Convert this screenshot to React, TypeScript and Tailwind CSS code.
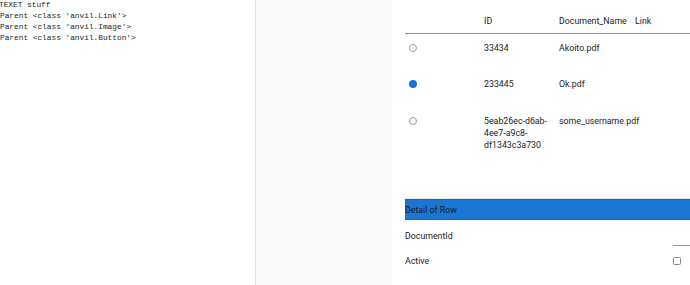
import React from "react";

type Row = { id: string; name: string; selected: boolean; h: string; pt: string };

const ROWS: Row[] = [
  { id: "33434", name: "Akoito.pdf", selected: false, h: "h-[36px]", pt: "pt-[8px]" },
  { id: "233445", name: "Ok.pdf", selected: true, h: "h-[37px]", pt: "pt-[8px]" },
  { id: "5eab26ec-d6ab-4ee7-a9c8-df1343c3a730", name: "some_username.pdf", selected: false, h: "h-[92px]", pt: "pt-[8px]" },
];

function Radio({ checked }: { checked: boolean }) {
  if (checked) {
    return <span className="block w-[8px] h-[8px] rounded-full bg-[#1a6fe0]" />;
  }
  return <span className="block w-[8px] h-[8px] rounded-full border border-[#9e9e9e] bg-white" />;
}

export default function App() {
  return (
    <div className="flex w-[690px] h-[285px] overflow-hidden bg-white">
      {/* output panel */}
      <div className="w-[256px] shrink-0 border-r border-[#dedede] bg-white font-['Liberation_Mono',monospace] text-[7.8px] leading-[11px] text-[#1e1e1e]">
        <div className="whitespace-pre -ml-[1px]">TEXET stuff</div>
        <div className="whitespace-pre">Parent &lt;class 'anvil.Link'&gt;</div>
        <div className="whitespace-pre">Parent &lt;class 'anvil.Image'&gt;</div>
        <div className="whitespace-pre">Parent &lt;class 'anvil.Button'&gt;</div>
      </div>

      <div className="w-[136px] shrink-0 bg-[#f9f9f9]" />

      {/* app panel */}
      <div className="flex-1 pl-[13px] font-['Roboto',sans-serif] text-[8.8px] leading-[12px] text-[#232323]">
        <div className="flex h-[34px] border-b border-[#8c8c8c] pt-[15px]">
          <div className="w-[79px]" />
          <div className="w-[75px]">ID</div>
          <div className="w-[76px]">Document_Name</div>
          <div className="flex-1">Link</div>
        </div>

        {ROWS.map((r, i) => (
          <div
            key={r.id}
            className={`flex ${r.h} ${r.pt} ${i === ROWS.length - 1 ? "border-b border-[#ececec]" : ""}`}
          >
            <div className="w-[79px] pl-[4px] pt-[2px]">
              <Radio checked={r.selected} />
            </div>
            <div className="w-[75px] pr-[6px] break-words">{r.id}</div>
            <div className="w-[76px]">{r.name}</div>
            <div className="flex-1" />
          </div>
        ))}

        <div className="h-[21px] bg-[#1976d2] border-y border-[#1565c0] flex items-center text-[#1a1a1a]">
          Detail of Row
        </div>

        <div className="relative h-[28px]">
          <div className="pt-[10px]">DocumentId</div>
          <div className="absolute right-0 top-[25px] w-[17px] border-b border-[#9a9a9a]" />
        </div>

        <div className="flex items-center h-[28px] pb-[2px]">
          <div className="flex-1">Active</div>
          <div className="w-[17px]">
            <span className="block w-[8px] h-[8px] rounded-[1.5px] border border-[#8a8a8a] bg-white" />
          </div>
        </div>
      </div>
    </div>
  );
}
